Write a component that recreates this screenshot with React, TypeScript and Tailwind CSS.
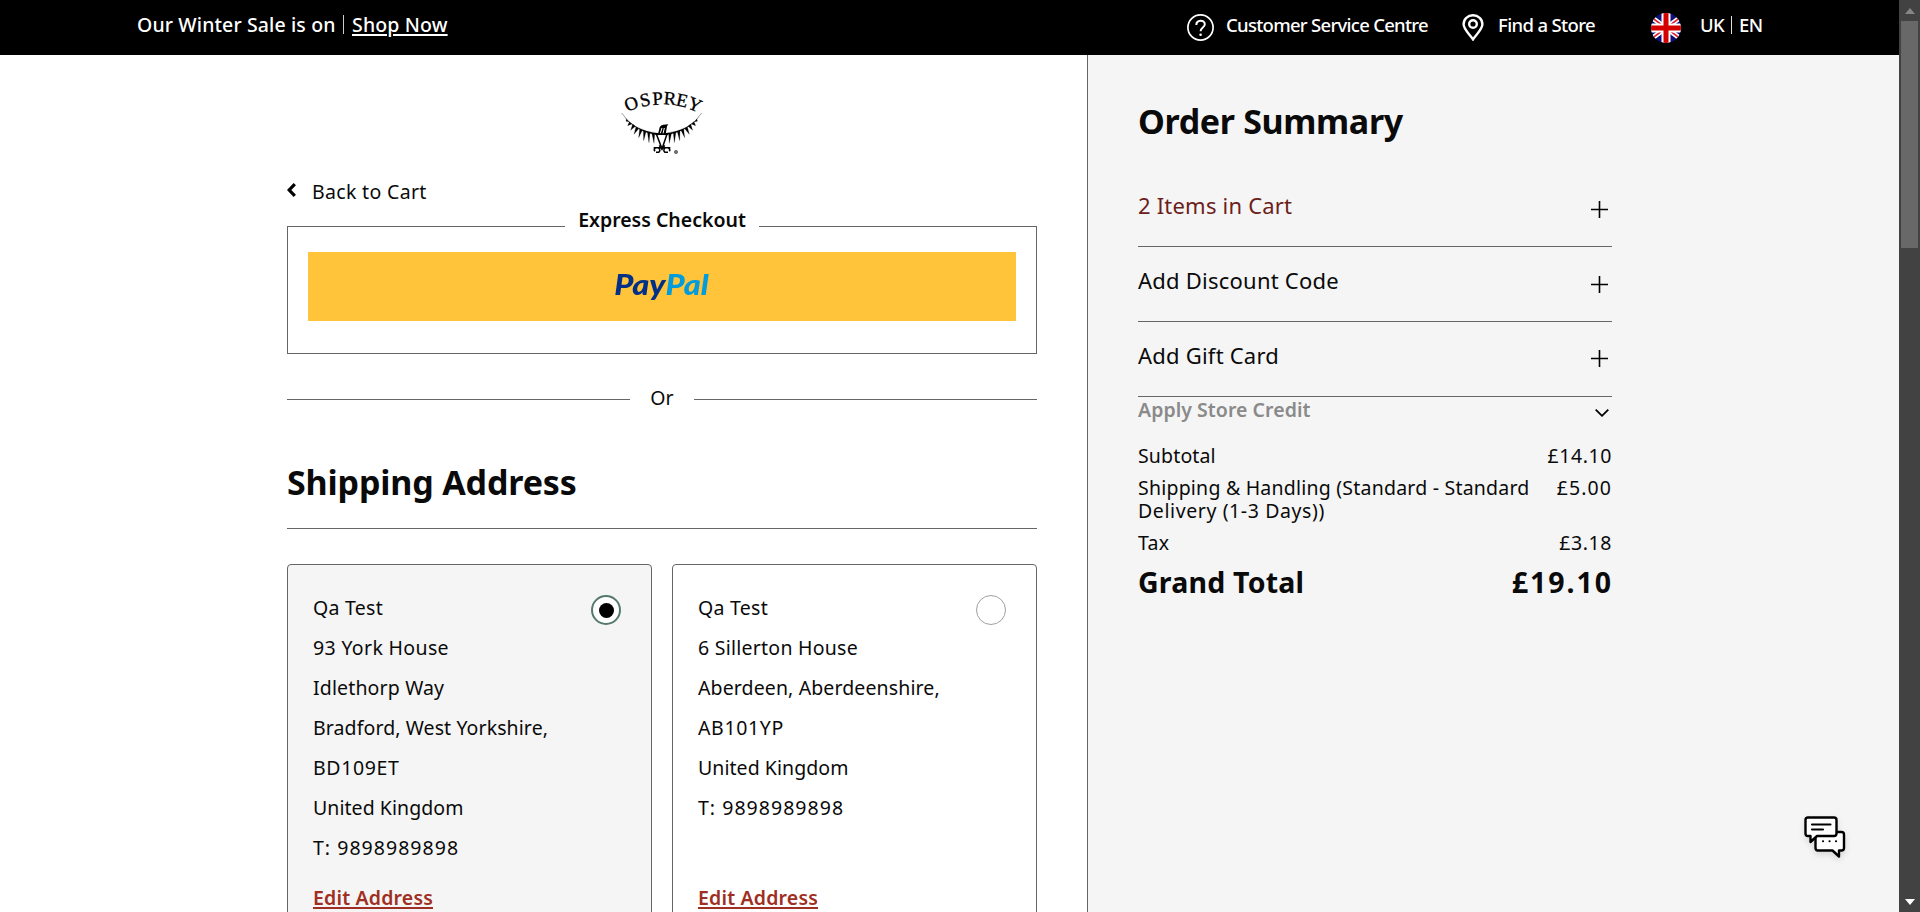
import type { ReactNode } from "react";

function OspreyLogo() {
  const wing = "M65 99 Q98 152 176 160 L176 165 Q102 156 65 99 Z";
  const feathers =
    "M79 117 L87 125 L78 124 Z M88 125 L96 132 L83 137 Z M98 132 L106 139 L92 151 Z M108 140 L116 146 L102 163 Z M119 146 L127 151 L116 173 Z M130 151 L138 155 L131 182 Z M142 155 L150 159 L147 188 Z M155 158 L164 163 L162 190 Z";
  return (
    <svg viewBox="0 0 390 255" className="ml-[313px] h-[85px] w-[130px]">
      <text
        className="font-['Liberation_Serif',serif]"
        fontSize="56"
        fill="#000"
        stroke="#000"
        strokeWidth="1"
        x="81 124 158 190 226 259"
        y="95 81 75 72 76 83"
        rotate="-20 -12 -3 5 12 22"
      >
        OSPREY
      </text>
      <g fill="#000" stroke="#000" strokeWidth="0.6">
        <path d={wing} />
        <path d={feathers} />
        <g transform="translate(370 0) scale(-1 1)">
          <path d={wing} />
          <path d={feathers} />
        </g>
      </g>
      <path d="M174 163 L179 142 Q182 135 190 134 L205 133 L201 139 L197 163 Z" fill="#000" />
      <path d="M181 160 L186 144 M189 161 L193 144" stroke="#fff" strokeWidth="3" />
      <path d="M169 162 L184 201 M201 162 L188 201 M166 163 H204" stroke="#000" strokeWidth="4.5" fill="none" />
      <path d="M161 203 H211 M166 203 Q160 209 165 214 M176 203 Q183 212 176 217 H168 M195 203 Q188 212 195 217 H204 M205 203 Q212 209 208 214 M178 196 L186 208 L194 196" stroke="#000" strokeWidth="4.5" fill="none" />
      <circle cx="228" cy="216" r="5" fill="#777" stroke="#333" strokeWidth="1.5" />
    </svg>
  );
}

function HelpIcon() {
  return (
    <svg viewBox="0 0 27 27" className="size-[27px]" fill="none" stroke="#fff" strokeWidth="1.7">
      <circle cx="13.5" cy="13.5" r="12.6" />
      <path d="M9.3 11 C9.3 5.2 17.8 5.4 17.8 10.3 C17.8 13.6 13.6 13.4 13.6 17.3" strokeWidth="2" />
      <circle cx="13.6" cy="20.8" r="1.3" fill="#fff" stroke="none" />
    </svg>
  );
}

function PinIcon() {
  return (
    <svg viewBox="0 0 22 27" className="h-[27px] w-[22px]" fill="none" stroke="#fff" strokeWidth="2.4">
      <path d="M11 25.4 C8 20.5 1.6 15.5 1.6 10.3 C1.6 5.2 5.7 1.2 11 1.2 C16.3 1.2 20.4 5.2 20.4 10.3 C20.4 15.5 14 20.5 11 25.4 Z" />
      <circle cx="11" cy="10" r="3.8" />
    </svg>
  );
}

function Flag() {
  return (
    <svg viewBox="0 0 30 30" className="size-[30px]">
      <clipPath id="round"><circle cx="15" cy="15" r="15" /></clipPath>
      <g clipPath="url(#round)">
        <rect width="30" height="30" fill="#10107a" />
        <path d="M0 4 L30 26 M30 4 L0 26" stroke="#fff" strokeWidth="5" />
        <path d="M0 4 L30 26 M30 4 L0 26" stroke="#d8232a" strokeWidth="1.6" />
        <path d="M15 0 V30 M0 15 H30" stroke="#fff" strokeWidth="9" />
        <path d="M15 0 V30 M0 15 H30" stroke="#d40000" strokeWidth="5" />
      </g>
    </svg>
  );
}

function ChatIcon() {
  return (
    <svg viewBox="0 0 44 44" className="h-[44px] w-[44px] overflow-visible drop-shadow-md" stroke="#000" strokeWidth="2.4" strokeLinejoin="round" strokeLinecap="round">
      <path d="M14 16 H37.500 Q40 16 40 18.500 V32 Q40 34.500 37.500 34.500 H35 V40.500 L28.500 34.500 H14 Q11.500 34.500 11.500 32 V18 Z" fill="#fff" />
      <path d="M4 1.500 H30 Q32.500 1.500 32.500 4 V17.500 Q32.500 20 30 20 H13 L6.500 26 V20 H4 Q1.500 20 1.500 17.500 V4 Q1.500 1.500 4 1.500 Z" fill="#fff" />
      <path d="M8 8.500 H26.500 M8 13.500 H19" fill="none" strokeWidth="2.1" />
      <path d="M19 25.300 H19.100 M25.500 25.300 H25.600 M32 25.300 H32.100" fill="none" strokeWidth="2.1" />
    </svg>
  );
}

function AddressCard({ selected, lines }: { selected?: boolean; lines: { text: string; className: string }[] }) {
  return (
    <div className={"flex h-[380px] w-[365px] justify-between rounded-t-[4px] border border-[#666] pt-[23px] pr-[30px] pl-[25px] text-[19.5px] text-[#0a0a0a] " + (selected ? "bg-[#f5f5f5]" : "bg-white")}>
      <div>
        <div className="h-[290px]">
          {lines.map((l) => (
            <div key={l.text} className={"h-10 leading-[40px] whitespace-nowrap " + l.className}>{l.text}</div>
          ))}
        </div>
        <a className="block h-10 leading-[40px] font-semibold tracking-[0.18px] text-[#9e2f22] underline decoration-2 underline-offset-2 [text-decoration-skip-ink:none]">Edit Address</a>
      </div>
      {selected ? (
        <span className="mt-[7px] flex size-[30px] items-center justify-center rounded-full border-2 border-[#557a6c] bg-white">
          <span className="size-[15px] rounded-full bg-black" />
        </span>
      ) : (
        <span className="mt-[7px] size-[30px] rounded-full border border-[#a0a0a0] bg-white" />
      )}
    </div>
  );
}

function SummaryRow({ children, className, icon }: { children: ReactNode; className: string; icon: string }) {
  return (
    <div className="flex h-[75px] justify-between border-b border-[#666] pr-[4px] text-[22px]">
      <span className={"mt-[18px] h-[30px] leading-[30px] " + className}>{children}</span>
      <svg viewBox="0 0 17 17" className={"size-[17px] " + icon} stroke="#000" strokeWidth="1.6">
        <path d="M8.500 0 V17 M0 8.500 H17" />
      </svg>
    </div>
  );
}

export default function App() {
  return (
    <div className="flex h-[912px] w-[1920px] overflow-hidden bg-white font-['Noto_Sans',sans-serif] text-[19.5px] text-[#0a0a0a]">
      <div className="w-[1899px]">
        <header className="flex h-[55px] bg-black pl-[137px] text-white">
          <div className="flex h-[49px] w-[1050px] items-center font-medium whitespace-nowrap">
            <span className="w-[206px] tracking-[0.12px]">Our Winter Sale is on</span>
            <span className="mr-[8px] h-[19px] w-px bg-[#ccc]" />
            <a className="tracking-[0.15px] underline decoration-2 underline-offset-2">Shop Now</a>
          </div>
          <div className="flex h-[50px] items-center text-[18.5px] font-medium whitespace-nowrap">
            <div className="mt-[5px]"><HelpIcon /></div>
            <span className="ml-[12px] w-[236px] tracking-[-0.72px]">Customer Service Centre</span>
            <div className="mt-[5px]"><PinIcon /></div>
            <span className="ml-[14px] w-[153px] tracking-[-0.64px]">Find a Store</span>
            <div className="mt-[6px]"><Flag /></div>
            <span className="ml-[19px] w-[31px] tracking-[-0.6px]">UK</span>
            <span className="mr-[7px] h-[18px] w-px bg-[#ddd]" />
            <span className="tracking-[-0.6px]">EN</span>
          </div>
        </header>

        <div className="flex h-[857px]">
          <main className="w-[1087px] pt-[25px] pl-[287px]">
            <div className="w-[750px]">
              <OspreyLogo />
              <a className="mt-[12px] flex h-[30px] items-center">
                <svg viewBox="0 0 9 14" className="mb-1 h-[14px] w-[9px]" fill="none" stroke="#000" strokeWidth="3.2">
                  <path d="M7.800 1.200 L2.200 7 L7.800 12.800" />
                </svg>
                <span className="ml-[16px] tracking-[0.33px]">Back to Cart</span>
              </a>

              <section className="relative mt-[19px] h-[128px] border border-[#666] px-5 pt-[25px]">
                <h2 className="absolute -top-[21px] left-[277px] h-[27px] w-[194px] bg-white text-center leading-[27px] font-semibold">Express Checkout</h2>
                <button className="flex h-[69px] w-full items-center justify-center bg-[#ffc439] pb-[5px] font-['Lato',sans-serif] text-[28.5px] font-black italic">
                  <span className="mr-px flex scale-x-[1.14]">
                    <span className="text-[#003087]">Pay</span>
                    <span className="text-[#009cde]">Pal</span>
                  </span>
                </button>
              </section>

              <div className="mt-[29px] flex h-[30px] items-center">
                <span className="mt-[3px] h-px w-[343px] bg-[#666]" />
                <span className="w-[64px] text-center">Or</span>
                <span className="mt-[3px] h-px flex-1 bg-[#666]" />
              </div>

              <h1 className="mt-[47px] h-[69px] border-b border-[#666] text-[34px] leading-[44px] font-bold tracking-[-0.15px]">Shipping Address</h1>

              <div className="mt-[35px] flex gap-5">
                <AddressCard
                  selected
                  lines={[
                    { text: "Qa Test", className: "tracking-[0.27px]" },
                    { text: "93 York House", className: "tracking-[0.35px]" },
                    { text: "Idlethorp Way", className: "tracking-[0.15px]" },
                    { text: "Bradford, West Yorkshire,", className: "tracking-[0.1px]" },
                    { text: "BD109ET", className: "tracking-[0.65px]" },
                    { text: "United Kingdom", className: "tracking-[0.06px]" },
                    { text: "T: 9898989898", className: "tracking-[1.03px]" },
                  ]}
                />
                <AddressCard
                  lines={[
                    { text: "Qa Test", className: "tracking-[0.27px]" },
                    { text: "6 Sillerton House", className: "tracking-[0.25px]" },
                    { text: "Aberdeen, Aberdeenshire,", className: "tracking-[0.12px]" },
                    { text: "AB101YP", className: "tracking-[0.65px]" },
                    { text: "United Kingdom", className: "tracking-[0.06px]" },
                    { text: "T: 9898989898", className: "tracking-[1.03px]" },
                  ]}
                />
              </div>
            </div>
          </main>

          <aside className="w-[812px] border-l border-[#666] bg-[#f5f5f5] pt-[44px] pl-[50px]">
            <div className="w-[474px]">
              <h2 className="h-[73px] text-[34px] leading-[44px] font-bold tracking-[-0.35px]">Order Summary</h2>
              <SummaryRow className="tracking-[0.2px] text-[#6b2019]" icon="mt-[29px]">2 Items in Cart</SummaryRow>
              <SummaryRow className="tracking-[0.23px]" icon="mt-[29px]">Add Discount Code</SummaryRow>
              <SummaryRow className="tracking-[0.22px]" icon="mt-[28px]">Add Gift Card</SummaryRow>
              <div className="flex h-[47px] justify-between pr-[3px]">
                <span className="h-[26px] leading-[26px] font-semibold tracking-[0.05px] text-[#8a8a8a]">Apply Store Credit</span>
                <svg viewBox="0 0 14 8" className="mt-[12px] h-[8px] w-[14px]" fill="none" stroke="#000" strokeWidth="1.8">
                  <path d="M0.700 0.700 L7 6.800 L13.300 0.700" />
                </svg>
              </div>
              <div className="flex h-[32px] justify-between leading-[23px]">
                <span className="tracking-[0.15px]">Subtotal</span>
                <span className="tracking-[0.6px]">£14.10</span>
              </div>
              <div className="flex h-[55px] justify-between leading-[23px]">
                <span className="whitespace-nowrap">
                  <span className="block tracking-[0.22px]">Shipping &amp; Handling (Standard - Standard</span>
                  <span className="block tracking-[0.6px]">Delivery (1-3 Days))</span>
                </span>
                <span className="tracking-[1.1px]">£5.00</span>
              </div>
              <div className="flex h-[32px] justify-between leading-[23px]">
                <span className="tracking-[0.3px]">Tax</span>
                <span className="tracking-[0.6px]">£3.18</span>
              </div>
              <div className="flex justify-between text-[28.5px] leading-[38px] font-bold">
                <span className="tracking-[0.2px]">Grand Total</span>
                <span className="-mr-[1px] tracking-[1.95px]">£19.10</span>
              </div>
            </div>
            <div className="mt-[215px] ml-[666px]"><ChatIcon /></div>
          </aside>
        </div>
      </div>

      <div className="flex w-[21px] flex-col items-center justify-between bg-[#424242]">
        <div className="flex flex-col items-center">
          <svg viewBox="0 0 10 6" className="mt-[8px] h-[6px] w-[10px]"><path d="M5 0 L10 6 H0 Z" fill="#868686" /></svg>
          <div className="mt-[7px] h-[227px] w-[17px] bg-[#686868]" />
        </div>
        <svg viewBox="0 0 10 6" className="mb-[7px] h-[6px] w-[10px]"><path d="M0 0 H10 L5 6 Z" fill="#fff" /></svg>
      </div>
    </div>
  );
}
